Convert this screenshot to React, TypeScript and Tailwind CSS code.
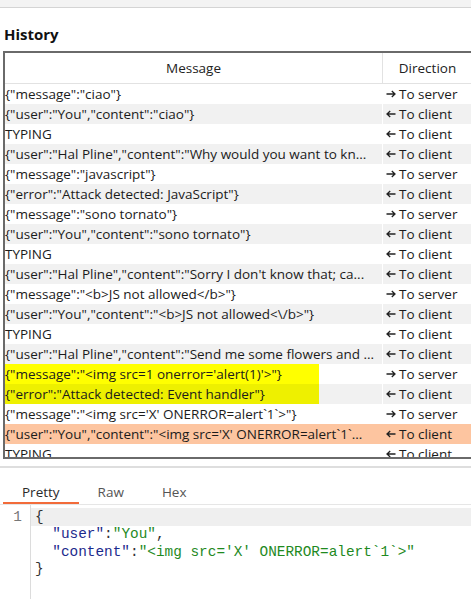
import React from "react";

type Row = { msg: string; dir: "server" | "client" };

const rows: Row[] = [
  { msg: '{"message":"ciao"}', dir: "server" },
  { msg: '{"user":"You","content":"ciao"}', dir: "client" },
  { msg: "TYPING", dir: "client" },
  { msg: '{"user":"Hal Pline","content":"Why would you want to kn...', dir: "client" },
  { msg: '{"message":"javascript"}', dir: "server" },
  { msg: '{"error":"Attack detected: JavaScript"}', dir: "client" },
  { msg: '{"message":"sono tornato"}', dir: "server" },
  { msg: '{"user":"You","content":"sono tornato"}', dir: "client" },
  { msg: "TYPING", dir: "client" },
  { msg: '{"user":"Hal Pline","content":"Sorry I don\'t know that; ca...', dir: "client" },
  { msg: '{"message":"<b>JS not allowed</b>"}', dir: "server" },
  { msg: '{"user":"You","content":"<b>JS not allowed<\\/b>"}', dir: "client" },
  { msg: "TYPING", dir: "client" },
  { msg: '{"user":"Hal Pline","content":"Send me some flowers and ...', dir: "client" },
  { msg: '{"message":"<img src=1 onerror=\'alert(1)\'>"}', dir: "server" },
  { msg: '{"error":"Attack detected: Event handler"}', dir: "client" },
  { msg: '{"message":"<img src=\'X\' ONERROR=alert`1`>"}', dir: "server" },
  { msg: '{"user":"You","content":"<img src=\'X\' ONERROR=alert`1`...', dir: "client" },
  { msg: "TYPING", dir: "client" },
];

const ui = "font-['Open_Sans','Noto_Sans',sans-serif]";

function Arrow({ right }: { right: boolean }) {
  return (
    <svg width="10" height="8" viewBox="0 0 10 8" className={right ? "" : "-scale-x-100"}>
      <path d="M0.5 4H9M5.8 1L9 4L5.8 7" fill="none" stroke="#222" strokeWidth="1.3" />
    </svg>
  );
}

export default function App() {
  return (
    <div className={`w-[471px] h-[599px] overflow-hidden bg-white text-[#1b1b1b] ${ui}`}>
      <div className="h-[8px] bg-[#f3f3f3] border-b border-[#d4d4d4]" />

      <h2 className="mt-[16px] mb-[7px] pl-[4px] h-[20px] leading-[20px] text-[15px] font-bold text-[#111]">
        History
      </h2>

      {/* history table */}
      <div className="ml-[3px] w-[480px] h-[408px] overflow-hidden border-t-2 border-l-2 border-b-2 border-[#6a6a6a]">
        <div className="flex h-[31px] border-b border-[#e2e2e2] text-[13.5px] text-[#222]">
          <div className="w-[377px] flex items-center justify-center">Message</div>
          <div className="w-[90px] flex items-center justify-center border-l border-[#e2e2e2]">Direction</div>
        </div>
        {rows.map((r, i) => {
          const selected = i === 17;
          const gray = i % 2 === 1;
          const bg = selected ? "bg-[#fdc5a0]" : gray ? "bg-[#f1f1f1]" : "bg-white";
          const marked = i === 14 || i === 15;
          return (
            <div key={i} className={`flex h-[20px] text-[13.5px] leading-[20px] ${bg}`}>
              <div className="w-[377px] overflow-hidden whitespace-nowrap">
                <span
                  className={`block h-[20px] ${
                    marked ? (i === 14 ? "w-[314px] bg-[#ffff00]" : "w-[314px] bg-[#eef000]") : ""
                  }`}
                >
                  {r.msg}
                </span>
              </div>
              <div
                className={`flex-1 pl-[3px] flex items-center gap-[3px] whitespace-nowrap border-l ${
                  selected ? "border-[#fdc5a0]" : "border-white"
                }`}
              >
                <Arrow right={r.dir === "server"} />
                <span>{r.dir === "server" ? "To server" : "To client"}</span>
              </div>
            </div>
          );
        })}
      </div>

      <div className="mt-[7px] h-[2px] bg-[#dedede]" />

      {/* tabs */}
      <div className="flex pt-[14px] pl-[3px] border-b border-[#e6e6e6] text-[13.5px]">
        <div className="px-[19px] h-[22px] leading-[20px] border-b-2 border-[#f26b3a] text-[#2a2a2a]">Pretty</div>
        <div className="px-[19px] h-[22px] leading-[20px] text-[#555]">Raw</div>
        <div className="px-[19px] h-[22px] leading-[20px] text-[#555]">Hex</div>
      </div>

      {/* code view */}
      <div className="flex h-[120px] font-['Liberation_Mono','Courier_New',monospace] text-[14.4px]">
        <div className="w-[31px] border-r border-[#dcdcdc] pt-[3px] text-right pr-[8px] text-[#777]">
          <div className="h-[18px] leading-[18px]">1</div>
        </div>
        <div className="flex-1 pt-[3px] whitespace-pre">
          <div className="h-[18px] leading-[18px] bg-[#efefef] pl-[4px] text-[#333]">{"{"}</div>
          <div className="h-[17.5px] leading-[17.5px] pl-[4px]">
            {"  "}
            <span className="text-[#1c2a8c]">"user"</span>
            <span className="text-[#333]">:</span>
            <span className="text-[#1f8a1f]">"You"</span>
            <span className="text-[#333]">,</span>
          </div>
          <div className="h-[17.5px] leading-[17.5px] pl-[4px]">
            {"  "}
            <span className="text-[#1c2a8c]">"content"</span>
            <span className="text-[#333]">:</span>
            <span className="text-[#1f8a1f]">"&lt;img src='X' ONERROR=alert`1`&gt;"</span>
          </div>
          <div className="h-[17.5px] leading-[17.5px] pl-[4px] text-[#333]">{"}"}</div>
        </div>
      </div>
    </div>
  );
}
